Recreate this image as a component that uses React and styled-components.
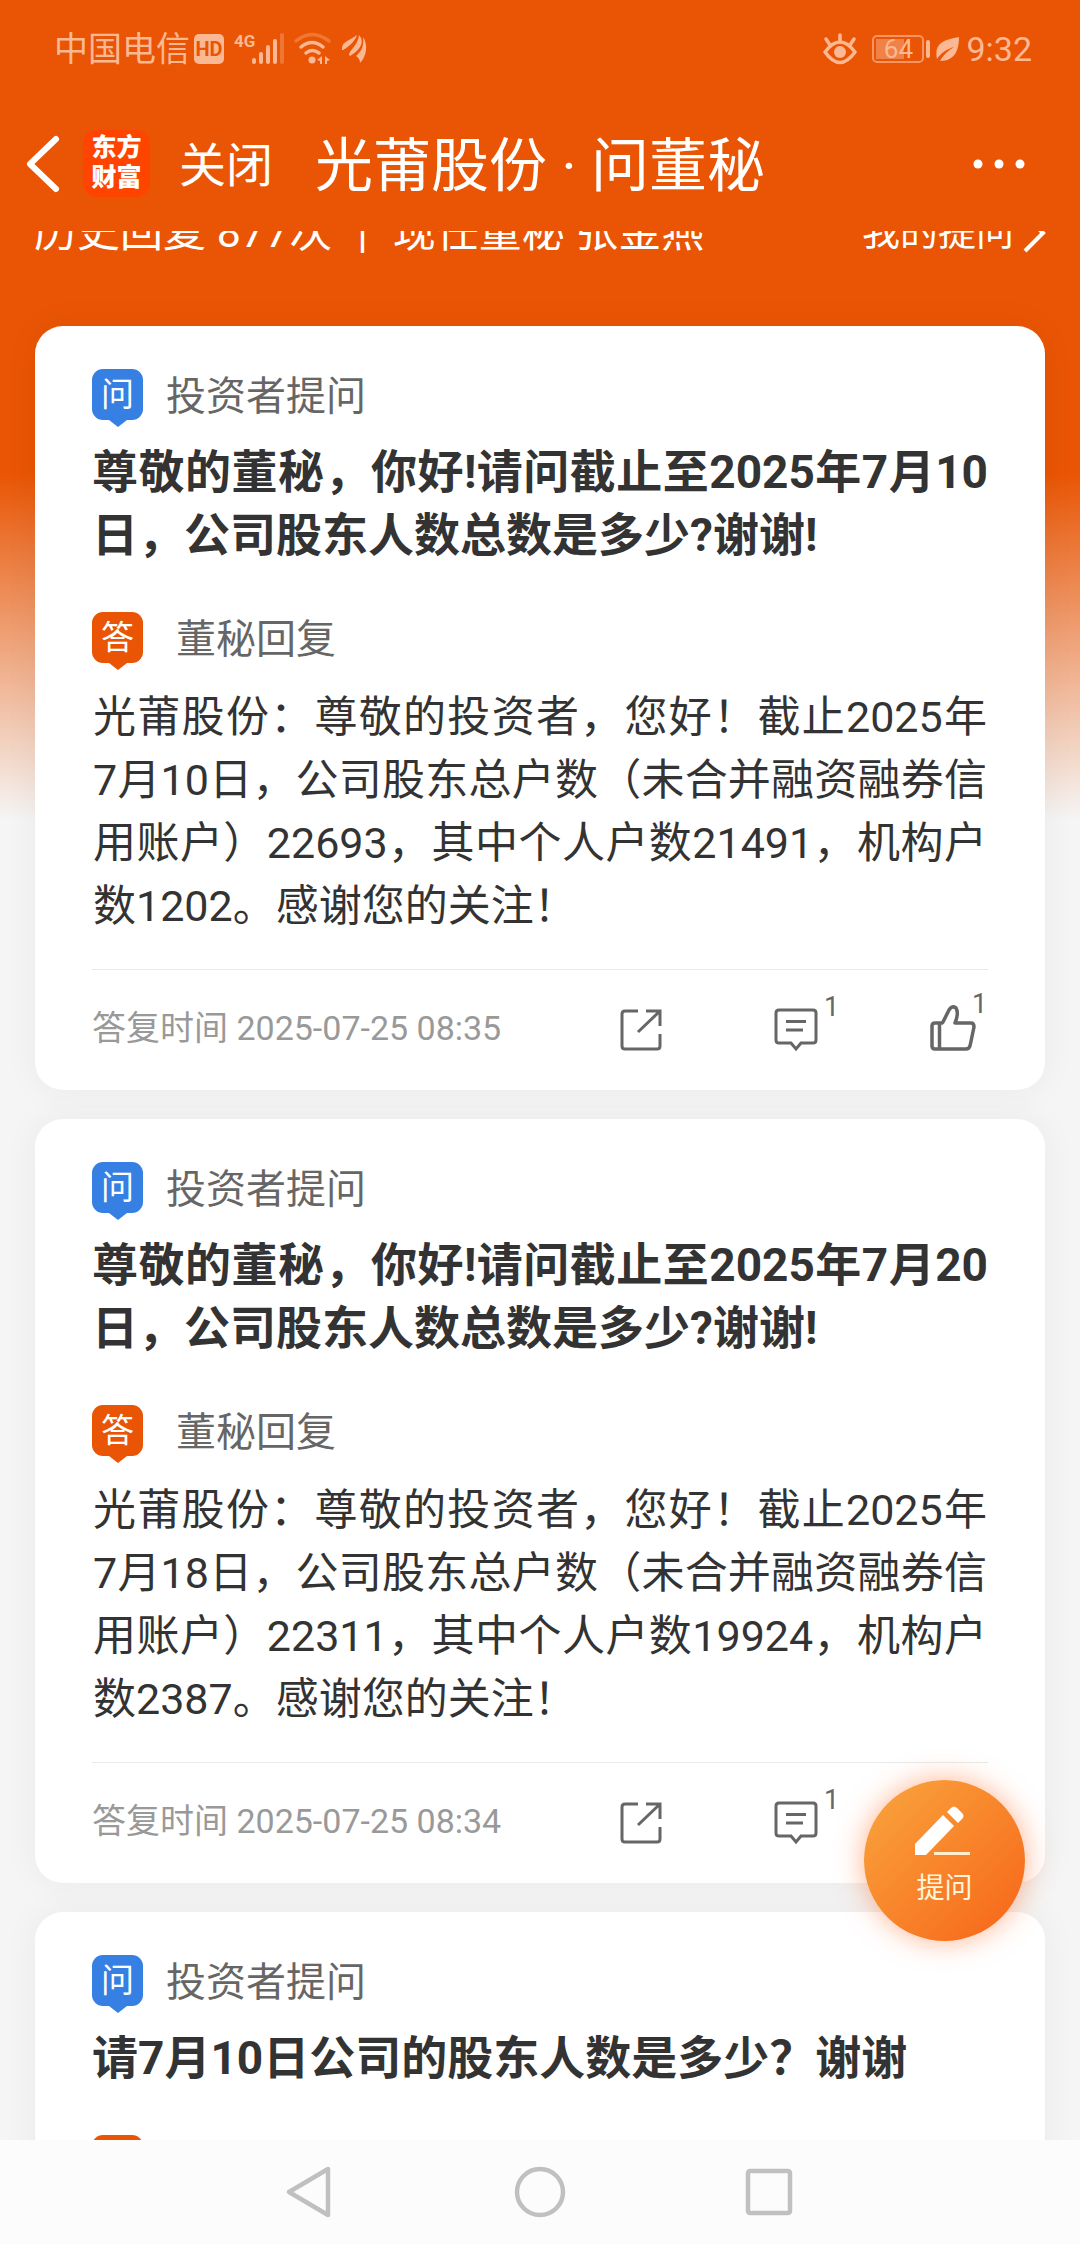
import React from 'react';
import styled, { createGlobalStyle } from 'styled-components';

const GlobalStyle = createGlobalStyle`
  * {
    box-sizing: border-box;
  }

  body {
    margin: 0;
    font-family: Roboto, 'Noto Sans CJK SC', sans-serif;
    color: #333;
  }

  button {
    margin: 0;
    padding: 0;
    border: none;
    background: none;
    font: inherit;
    color: inherit;
    cursor: pointer;
  }

  svg {
    display: block;
    flex: none;
  }
`;

const Page = styled.div`
  position: relative;
  height: 100vh;
  display: flex;
  flex-direction: column;
  overflow: hidden;
  background: linear-gradient(#e95504 473px, #f5f5f5 820px);
`;

const StatusBar = styled.div`
  height: 96px;
  flex: none;
  padding: 2px 48px 0 54px;
  display: flex;
  align-items: center;
  justify-content: space-between;
  font-size: 34px;
  line-height: 40px;
  color: #fbb893;
`;

const StatusGroup = styled.div`
  display: flex;
  align-items: center;
  gap: ${(props) => props.gap}px;
`;

const HdBadge = styled.span`
  width: 30px;
  height: 30px;
  border-radius: 5px;
  background-color: #fbb893;
  color: #e95504;
  font-size: 20px;
  font-weight: 700;
  line-height: 30px;
  text-align: center;
`;

const Battery = styled.div`
  display: flex;
  align-items: center;
  gap: 2px;

  &::after {
    content: '';
    width: 4px;
    height: 18px;
    border-radius: 2px;
    background-color: #fbb893;
  }
`;

const BatteryBody = styled.div`
  width: 52px;
  height: 28px;
  padding: 2px;
  border: 2px solid #f79664;
  border-radius: 5px;
`;

const BatteryLevel = styled.div`
  height: 20px;
  background: linear-gradient(to right, #f08147 64%, transparent 64%);
  font-size: 26px;
  line-height: 20px;
  text-align: center;
`;

const NavBar = styled.header`
  height: 135px;
  flex: none;
  padding: 0 55px 0 24px;
  display: flex;
  align-items: center;
  color: white;
`;

const Logo = styled.div`
  width: 67px;
  height: 67px;
  margin: 0 29px 0 21px;
  padding-top: 3px;
  border-radius: 14px;
  background-color: #ff4400;
  font-size: 25px;
  font-weight: 900;
  line-height: 30px;
  text-align: center;
`;

const CloseButton = styled.button`
  && {
    padding-top: 4px;
    font-size: 47px;
    line-height: 64px;
  }
`;

const Title = styled.h1`
  flex: 1;
  margin: 0 0 0 42px;
  padding-top: 4px;
  font-size: 58px;
  font-weight: 400;
  line-height: 72px;
  white-space: nowrap;
`;

const Scroller = styled.main`
  flex: 1;
  min-height: 0;
  overflow: hidden;
`;

/* scrolled partly under the nav bar */
const Summary = styled.div`
  margin-top: -30px;
  padding: 0 34px;
  display: flex;
  align-items: center;
  justify-content: space-between;
  font-size: 43px;
  line-height: 63px;
  color: white;
`;

const SummaryText = styled.div`
  display: flex;
  gap: 25px;
`;

const MyQuestions = styled.a`
  display: flex;
  align-items: center;
  gap: 8px;
  font-size: 38px;
  color: inherit;
  text-decoration: none;
`;

const CardList = styled.div`
  margin-top: 62px;
  padding: 0 35px;
  display: flex;
  flex-direction: column;
  gap: 29px;
`;

const Card = styled.article`
  padding: 43px 57px 0;
  border-radius: 28px;
  background-color: white;
  box-shadow: 0 0 36px rgba(0, 0, 0, 0.05);
`;

const CardHeader = styled.div`
  display: flex;
  align-items: flex-start;
  gap: ${(props) => props.gap}px;
  font-size: 40px;
  line-height: 56px;
  color: #666;
`;

const Tag = styled.span`
  width: 51px;
  height: 58px;
  flex: none;
  display: flex;
  flex-direction: column;
  align-items: center;

  &::after {
    content: '';
    border: 9px solid transparent;
    border-top: 7px solid ${(props) => props.color};
    border-bottom: none;
  }
`;

const TagText = styled.span`
  width: 51px;
  height: 51px;
  border-radius: 11px;
  background-color: ${(props) => props.color};
  color: white;
  font-size: 33px;
  line-height: 52px;
  text-align: center;
`;

const Question = styled.h2`
  margin: 14px 0 45px;
  font-size: 46px;
  font-weight: 700;
  line-height: 63px;
  text-align: justify;
`;

const Answer = styled.p`
  margin: 16px 1px 31px;
  font-size: 43px;
  line-height: 63px;
  text-align: justify;
`;

const CardFooter = styled.footer`
  height: 121px;
  border-top: 1px solid #e9e9e9;
  display: flex;
  align-items: center;
  justify-content: space-between;
  color: #666;
`;

const ReplyTime = styled.span`
  padding-bottom: 4px;
  font-size: 34px;
  line-height: 48px;
  color: #999;
`;

const Actions = styled.div`
  margin-right: 12px;
  display: flex;
  align-items: center;
  gap: 112px;
`;

const Action = styled.button`
  position: relative;
`;

const Count = styled.span`
  position: absolute;
  top: -16px;
  left: ${(props) => props.left}px;
  font-size: 27px;
  line-height: 30px;
`;

const AskButton = styled.button`
  && {
    position: absolute;
    right: 55px;
    bottom: 303px;
    width: 161px;
    height: 161px;
    padding-bottom: 8px;
    border-radius: 50%;
    display: flex;
    flex-direction: column;
    align-items: center;
    justify-content: center;
    gap: 12px;
    background: linear-gradient(135deg, #f99f3a 10%, #f76b1c 90%);
    box-shadow: 0 0 28px rgba(255, 104, 32, 0.5);
    color: #fff6dc;
    font-size: 28px;
    line-height: 40px;
  }
`;

const SystemNav = styled.nav`
  height: 104px;
  flex: none;
  display: flex;
  align-items: center;
  justify-content: center;
  gap: 178px;
  background-color: #fcfcfc;
`;

const SignalIcon = () => (
  <svg width="50" height="34" viewBox="0 0 50 34" fill="currentColor">
    <text x="0" y="15" fontSize="17" fontWeight="700">4G</text>
    <rect x="18" y="26" width="4" height="6" rx="2" />
    <rect x="25" y="20" width="4" height="12" rx="2" />
    <rect x="32" y="13" width="4" height="19" rx="2" />
    <rect x="39" y="7" width="4" height="25" rx="2" />
    <rect x="46" y="1" width="4" height="31" rx="2" opacity="0.35" />
  </svg>
);

const WifiIcon = () => (
  <svg width="38" height="34" viewBox="0 0 38 34" fill="none" stroke="currentColor" strokeWidth="3.5" strokeLinecap="round">
    <path d="M2 9 Q18 -4 35 9" opacity="0.35" />
    <path d="M7 15 Q18 6 29 15" />
    <path d="M12 21 Q18 16 25 21" />
    <circle cx="18" cy="28" r="3.5" fill="currentColor" stroke="none" />
    <path d="M23 28 l5 -4 v8 h-2 v-3z M31 24 l5 4 -3 1 v3 h-2z" fill="currentColor" stroke="none" />
  </svg>
);

const FeatherIcon = () => (
  <svg width="26" height="30" viewBox="0 0 26 30" fill="currentColor">
    <path d="M0 16 C-1 8 7 7 15 1 C13 7 8 12 1 16Z" />
    <path d="M7 21 C7 16 16 12 17 1 C23 7 19 16 8 22Z" />
    <path d="M14 22 C20 17 22 11 21 3 C26 10 25 22 18 29 C18 26 17 24 14 22Z" />
  </svg>
);

const EyeIcon = () => (
  <svg width="43" height="32" viewBox="0 0 43 32" fill="none" stroke="currentColor" strokeWidth="3.5" strokeLinecap="round">
    <path d="M2 19 Q17 -1 32 19 Q17 40 2 19Z" strokeLinejoin="round" />
    <circle cx="17" cy="19" r="6" fill="currentColor" stroke="none" />
    <path d="M17 2 v6 M3 6 l4 6 M31 6 l-4 6" />
  </svg>
);

const LeafIcon = () => (
  <svg width="24" height="26" viewBox="0 0 24 26" fill="currentColor">
    <path d="M23 1 C23 14 19 25 4 25 C8 18 13 14 18 11 C11 13 5 17 1 23 C-2 8 6 4 23 1Z" />
  </svg>
);

const ShareIcon = () => (
  <svg width="42" height="42" viewBox="0 0 42 42" fill="none" stroke="currentColor" strokeWidth="3">
    <path d="M18 2 H5 Q2 2 2 5 V37 Q2 40 5 40 H37 Q40 40 40 37 V25" />
    <path d="M26 2 H40 V17 M40 2 L18 23" />
  </svg>
);

const CommentIcon = () => (
  <svg width="44" height="44" viewBox="0 0 44 44" fill="none" stroke="currentColor" strokeWidth="3">
    <path d="M5 2 H39 Q42 2 42 5 V32 Q42 35 39 35 H27 L22 41 L17 35 H5 Q2 35 2 32 V5 Q2 2 5 2Z" />
    <path d="M12 13.5 H32 M12 22 H29" />
  </svg>
);

const LikeIcon = () => (
  <svg width="46" height="50" viewBox="0 0 46 50" fill="none" stroke="currentColor" strokeWidth="3.5" strokeLinejoin="round">
    <path d="M13 17 L19 5 Q22 0 26 3 Q29 8 25 18 H41 Q44 18 44 22 L40 41 Q39 44 36 44 H5 Q2 44 2 41 V21 Q2 18 5 18 H12Z" />
    <path d="M9.5 18 V44" />
  </svg>
);

const PenIcon = () => (
  <svg width="61" height="52" viewBox="0 0 61 52" fill="white">
    <path d="M1 39 L29 10 L40 21 L12 50 H1Z" />
    <path d="M33 7 L37 3 Q40 0 43 3 L48 8 Q51 11 48 14 L44 18Z" />
    <rect x="20" y="47" width="36" height="3" fill="#ffedcc" />
  </svg>
);

const items = [
  {
    id: 1,
    question: '尊敬的董秘，你好!请问截止至2025年7月10日，公司股东人数总数是多少?谢谢!',
    answer:
      '光莆股份：尊敬的投资者，您好！截止2025年7月10日，公司股东总户数（未合并融资融券信用账户）22693，其中个人户数21491，机构户数1202。感谢您的关注！',
    time: '2025-07-25 08:35',
    comments: 1,
    likes: 1,
  },
  {
    id: 2,
    question: '尊敬的董秘，你好!请问截止至2025年7月20日，公司股东人数总数是多少?谢谢!',
    answer:
      '光莆股份：尊敬的投资者，您好！截止2025年7月18日，公司股东总户数（未合并融资融券信用账户）22311，其中个人户数19924，机构户数2387。感谢您的关注！',
    time: '2025-07-25 08:34',
    comments: 1,
  },
  {
    id: 3,
    question: '请7月10日公司的股东人数是多少？谢谢',
  },
];

const QuestionCard = ({ item }) => (
  <Card>
    <CardHeader gap={23}>
      <Tag color="#3580e2">
        <TagText color="#3580e2">问</TagText>
      </Tag>
      投资者提问
    </CardHeader>
    <Question>{item.question}</Question>
    <CardHeader gap={33}>
      <Tag color="#e95504">
        <TagText color="#e95504">答</TagText>
      </Tag>
      董秘回复
    </CardHeader>
    {item.answer && (
      <>
        <Answer>{item.answer}</Answer>
        <CardFooter>
          <ReplyTime>答复时间 {item.time}</ReplyTime>
          <Actions>
            <Action aria-label="分享">
              <ShareIcon />
            </Action>
            <Action aria-label="评论">
              <CommentIcon />
              <Count left={50}>{item.comments}</Count>
            </Action>
            <Action aria-label="点赞">
              <LikeIcon />
              {item.likes && <Count left={42}>{item.likes}</Count>}
            </Action>
          </Actions>
        </CardFooter>
      </>
    )}
  </Card>
);

const App = () => (
  <Page>
    <GlobalStyle />
    <StatusBar>
      <StatusGroup gap={10}>
        <StatusGroup gap={4}>
          <span>中国电信</span>
          <HdBadge>HD</HdBadge>
        </StatusGroup>
        <SignalIcon />
        <WifiIcon />
        <FeatherIcon />
      </StatusGroup>
      <StatusGroup gap={6}>
        <EyeIcon />
        <Battery>
          <BatteryBody>
            <BatteryLevel>64</BatteryLevel>
          </BatteryBody>
        </Battery>
        <LeafIcon />
        <span>9:32</span>
      </StatusGroup>
    </StatusBar>
    <NavBar>
      <button aria-label="返回">
        <svg width="38" height="60" viewBox="0 0 38 60" fill="none" stroke="white" strokeWidth="6" strokeLinecap="round" strokeLinejoin="round">
          <path d="M32 5 L6 30 L32 55" />
        </svg>
      </button>
      <Logo>
        东方
        <br />
        财富
      </Logo>
      <CloseButton>关闭</CloseButton>
      <Title>光莆股份 · 问董秘</Title>
      <button aria-label="更多">
        <svg width="52" height="12" viewBox="0 0 52 12" fill="white">
          <circle cx="5" cy="6" r="4.5" />
          <circle cx="26" cy="6" r="4.5" />
          <circle cx="47" cy="6" r="4.5" />
        </svg>
      </button>
    </NavBar>
    <Scroller>
      <Summary>
        <SummaryText>
          <span>历史回复 877次</span>
          <span>|</span>
          <span>现任董秘 张金燕</span>
        </SummaryText>
        <MyQuestions href="#mine">
          我的提问
          <svg width="24" height="40" viewBox="0 0 24 40" fill="none" stroke="white" strokeWidth="4">
            <path d="M3 2 L21 20 L3 38" />
          </svg>
        </MyQuestions>
      </Summary>
      <CardList>
        {items.map((item) => (
          <QuestionCard key={item.id} item={item} />
        ))}
      </CardList>
    </Scroller>
    <AskButton>
      <PenIcon />
      提问
    </AskButton>
    <SystemNav>
      <button aria-label="后退">
        <svg width="50" height="54" viewBox="0 0 50 54" fill="none" stroke="#c0c0c0" strokeWidth="4.5" strokeLinejoin="round">
          <path d="M43 4 V50 L4 27Z" />
        </svg>
      </button>
      <button aria-label="主页">
        <svg width="54" height="54" viewBox="0 0 54 54" fill="none" stroke="#c0c0c0" strokeWidth="4.5">
          <circle cx="27" cy="27" r="23" />
        </svg>
      </button>
      <button aria-label="最近任务">
        <svg width="50" height="54" viewBox="0 0 50 54" fill="none" stroke="#c0c0c0" strokeWidth="4.5">
          <rect x="3" y="6" width="42" height="42" rx="2" />
        </svg>
      </button>
    </SystemNav>
  </Page>
);

export default App;
